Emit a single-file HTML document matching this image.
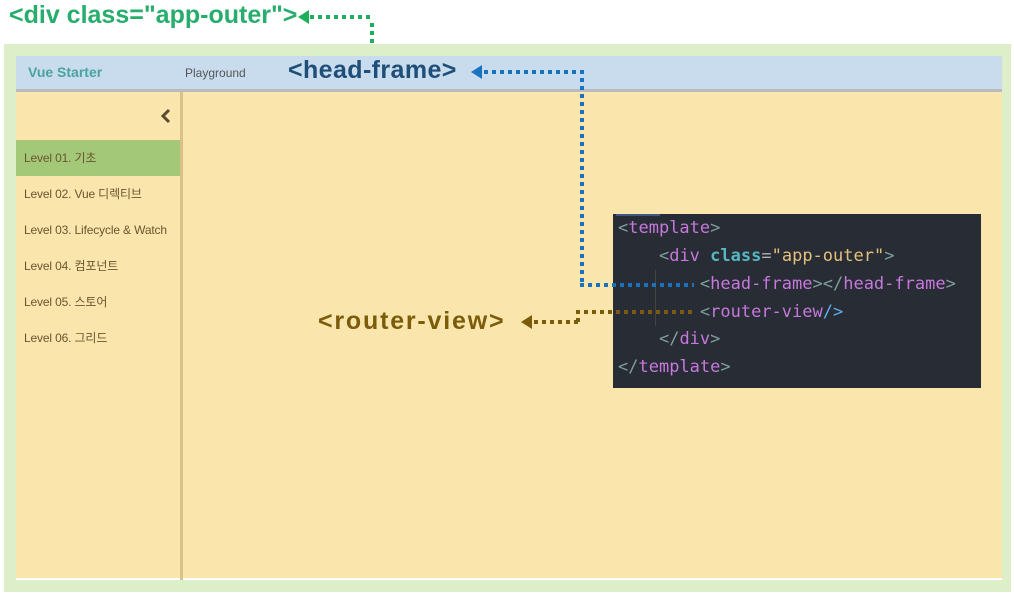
<!DOCTYPE html>
<html><head><meta charset="utf-8"><style>
body{margin:0;width:1014px;height:596px;background:#fff;position:relative;overflow:hidden;font-family:"Liberation Sans","Noto Sans CJK KR",sans-serif}
.a{position:absolute}
.h{height:4px;background:repeating-linear-gradient(90deg,var(--c) 0 4px,transparent 4px 8px)}
.v{width:4px;background:repeating-linear-gradient(180deg,var(--c) 0 4px,transparent 4px 8px)}
.item{position:absolute;left:16px;width:164px;height:36px;line-height:36px;padding-left:8px;box-sizing:border-box;font-size:12px;color:#6a5530;letter-spacing:-0.15px}
.code{font-family:"DejaVu Sans Mono","Liberation Mono",monospace;font-size:17px;white-space:pre;position:absolute;left:618px}
.t{color:#c678dd}.p{color:#7f9ea0}.k{color:#56b6c2;font-weight:bold}.s{color:#e5c07b}.e{color:#abb2bf}.b{color:#61afef}
</style></head><body>
<div class="a" style="left:9px;top:1px;font-size:25px;font-weight:bold;color:#27ad6c;letter-spacing:0">&lt;div class="app-outer"&gt;</div>
<div class="a" style="left:4px;top:44px;width:1007px;height:548px;background:#dcefc9"></div>
<div class="a" style="left:16px;top:56px;width:986px;height:33px;background:#c9dcee;border-bottom:3px solid #b8bcc0"></div>
<div class="a" style="left:28px;top:64px;font-size:14px;font-weight:bold;color:#4aa3a0">Vue Starter</div>
<div class="a" style="left:185px;top:66px;font-size:12px;color:#555">Playground</div>
<div class="a" style="left:288px;top:56px;font-size:25px;font-weight:bold;color:#1f4e79;letter-spacing:0.4px">&lt;head-frame&gt;</div>
<div class="a" style="left:16px;top:92px;width:986px;height:486px;background:#fae6ad;border-bottom:2px solid #fff"></div>
<div class="a" style="left:180px;top:92px;width:3px;height:488px;background:#d8c28a"></div>
<svg class="a" style="left:160px;top:108px" width="12" height="16"><path d="M9 2 L3 8 L9 14" stroke="#5a4a30" stroke-width="3" fill="none"/></svg>
<div class="item" style="top:140px;background:#a3c878">Level 01. 기초</div>
<div class="item" style="top:176px">Level 02. Vue 디렉티브</div>
<div class="item" style="top:212px">Level 03. Lifecycle &amp; Watch</div>
<div class="item" style="top:248px">Level 04. 컴포넌트</div>
<div class="item" style="top:284px">Level 05. 스토어</div>
<div class="item" style="top:320px">Level 06. 그리드</div>
<div class="a" style="left:318px;top:307px;font-size:25px;font-weight:bold;color:#7a5c0a;letter-spacing:1.8px">&lt;router-view&gt;</div>
<div class="a" style="left:613px;top:214px;width:368px;height:174px;background:#282c34"></div>
<div class="a" style="left:616px;top:214px;width:44px;height:2px;background:#3e5a80"></div>
<div class="a" style="left:655px;top:270px;width:1px;height:56px;background:#444"></div>
<div class="code" style="top:218px"><span class="p">&lt;</span><span class="t">template</span><span class="p">&gt;</span></div>
<div class="code" style="top:246px">    <span class="p">&lt;</span><span class="t">div</span> <span class="k">class</span><span class="e">=</span><span class="s">"app-outer"</span><span class="p">&gt;</span></div>
<div class="code" style="top:274px">        <span class="p">&lt;</span><span class="t">head-frame</span><span class="p">&gt;&lt;/</span><span class="t">head-frame</span><span class="p">&gt;</span></div>
<div class="code" style="top:302px">        <span class="p">&lt;</span><span class="t">router-view</span><span class="b">/&gt;</span></div>
<div class="code" style="top:329px">    <span class="p">&lt;/</span><span class="t">div</span><span class="p">&gt;</span></div>
<div class="code" style="top:357px"><span class="p">&lt;/</span><span class="t">template</span><span class="p">&gt;</span></div>
<div class="a" style="left:298px;top:10px;width:0;height:0;border-top:7px solid transparent;border-bottom:7px solid transparent;border-right:11px solid #1fae5a"></div>
<div class="a h" style="--c:#1fae5a;left:310px;top:15px;width:64px"></div>
<div class="a v" style="--c:#1fae5a;left:370px;top:23px;height:24px"></div>
<div class="a" style="left:471px;top:65px;width:0;height:0;border-top:7px solid transparent;border-bottom:7px solid transparent;border-right:11px solid #1a72c0"></div>
<div class="a h" style="--c:#1a72c0;left:484px;top:70px;width:100px"></div>
<div class="a v" style="--c:#1a72c0;left:580px;top:78px;height:208px"></div>
<div class="a h" style="--c:#1a72c0;left:580px;top:283px;width:114px"></div>
<div class="a" style="left:521px;top:315px;width:0;height:0;border-top:7px solid transparent;border-bottom:7px solid transparent;border-right:11px solid #7a5c0a"></div>
<div class="a h" style="--c:#7a5c0a;left:534px;top:320px;width:46px"></div>
<div class="a v" style="--c:#7a5c0a;left:576px;top:310px;height:14px"></div>
<div class="a h" style="--c:#7a5c0a;left:576px;top:310px;width:118px"></div>
</body></html>
